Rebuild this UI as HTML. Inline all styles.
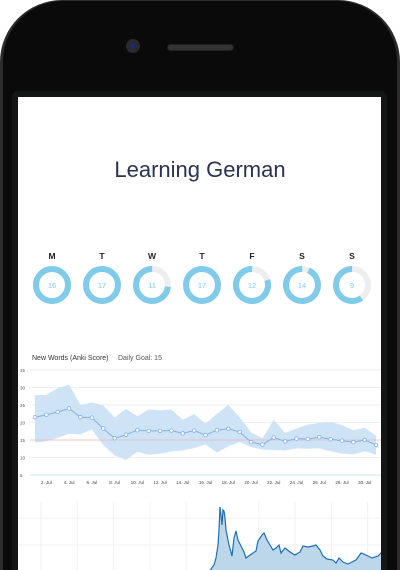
<!DOCTYPE html><html style="height:570px;overflow:hidden"><head><style>
html,body{margin:0;height:570px;overflow:hidden}
body{width:400px;background:#fff;position:relative;font-family:"Liberation Sans",sans-serif}
.ph{position:absolute;left:0;top:0;width:400px;height:570px;border-radius:62px 62px 0 0;background:#2c2c2c}
.ph2{position:absolute;left:3px;top:1px;width:394px;height:569px;border-radius:60px 60px 0 0;background:#0a0a0a}
.fr{position:absolute;left:12px;top:91px;width:375px;height:479px;border-radius:6px 6px 0 0;background:#141515}
.scr{position:absolute;left:18px;top:97px;width:363px;height:473px;background:#fff;overflow:hidden}
.cam{position:absolute;left:126px;top:39px;width:14px;height:14px;border-radius:50%;background:#2a2a2e}
.cam:after{content:"";position:absolute;left:4px;top:4px;width:6px;height:6px;border-radius:50%;background:#1b2a6a}
.sp{position:absolute;left:167px;top:44px;width:67px;height:7px;border-radius:4px;background:#333;border:1px solid #1f1f1f;box-sizing:border-box}
</style></head><body>
<div class="ph"></div><div class="ph2"></div><div class="cam"></div><div class="sp"></div><div class="fr"></div>
<div class="scr">
<svg width="363" height="473" viewBox="18 97 363 473" xmlns="http://www.w3.org/2000/svg" font-family="Liberation Sans, sans-serif">
<text x="200" y="177" text-anchor="middle" font-size="22" fill="#2a3350">Learning German</text>
<g id="donuts"></g>
<text x="32" y="360" font-size="7" fill="#333">New Words (Anki Score)</text>
<text x="118" y="360" font-size="7" fill="#555">Daily Goal: 15</text>
<g id="ch"></g>
</svg></div>
<script>
var h="";
var L=["M","T","W","T","F","S","S"],V=[16,17,11,17,12,14,9];
for(var i=0;i<7;i++){var cx=52+50*i,cy=285,r=16,c=2*Math.PI*r,f=Math.min(V[i]/15,1);
h+='<text x="'+cx+'" y="259" text-anchor="middle" font-size="8.5" font-weight="bold" fill="#222">'+L[i]+'</text>';
h+='<circle cx="'+cx+'" cy="'+cy+'" r="'+r+'" fill="none" stroke="#eee" stroke-width="6"/>';
h+='<circle cx="'+cx+'" cy="'+cy+'" r="'+r+'" fill="none" stroke="#80cbea" stroke-width="6" stroke-dasharray="'+(c*f)+' '+c+'" transform="rotate('+(-90+360*(1-f))+' '+cx+' '+cy+')"/>';
h+='<text x="'+cx+'" y="'+(cy+3)+'" text-anchor="middle" font-size="7.5" fill="#80cbea">'+V[i]+'</text>';}
document.getElementById("donuts").innerHTML=h;
var D=[21.5,22.2,23,24,21.5,21.4,18.3,15.5,16.5,17.8,17.6,17.6,17.7,16.9,17.7,16.4,17.8,18.2,17.3,14.4,13.7,15.7,14.6,15.4,15.3,15.8,15.2,14.8,14.4,15,13.6];
var U=[27.8,27.9,29.8,30.8,25,25.7,24.9,21.4,23.9,21.8,23.7,23.5,23.7,20.8,22.4,19.7,22.5,25,21.5,17.2,15.5,20.8,17,18.3,19.4,19.9,20.1,19.3,17.8,18.5,16.2];
var W=[14.3,14.6,15.6,16.8,16.6,18,13.6,10.6,9.3,11.6,10.8,11.1,11.7,12,12.7,13.7,11.4,13.2,14.4,13,12.3,12.1,12,12.6,12.5,12.6,11.8,11.1,10.9,11.8,10.8];
function X(i){return 35+i*11.37}function Y(v){return 475-(v-5)*3.5}
var g="";
for(var v=5;v<=35;v+=5){g+='<line x1="30" x2="381" y1="'+Y(v)+'" y2="'+Y(v)+'" stroke="'+(v==5?"#cfe3f5":"#eee")+'" stroke-width="1"/><text x="20" y="'+(Y(v)+2)+'" font-size="4.5" fill="#555">'+v+'</text>';}
var p="";for(i=0;i<31;i++)p+=X(i)+","+Y(U[i])+" ";for(i=30;i>=0;i--)p+=X(i)+","+Y(W[i])+" ";
g+='<polygon points="'+p+'" fill="#cfe3f6"/>';
g+='<line x1="30" x2="381" y1="'+Y(15)+'" y2="'+Y(15)+'" stroke="#f4a0a0" stroke-width="0.6"/>';
var q="";for(i=0;i<31;i++)q+=X(i)+","+Y(D[i])+" ";
g+='<polyline points="'+q+'" fill="none" stroke="#7fb0e6" stroke-width="1"/>';
for(i=0;i<31;i++)g+='<circle cx="'+X(i)+'" cy="'+Y(D[i])+'" r="1.8" fill="#fff" stroke="#7fb0e6" stroke-width="0.8"/>';
for(i=1;i<31;i+=2)g+='<text x="'+X(i)+'" y="484" text-anchor="middle" font-size="4.5" fill="#444">'+(i+1)+'. Jul</text>';
for(i=0;i<10;i++){var x=41+36.3*i;g+='<line x1="'+x+'" x2="'+x+'" y1="502" y2="570" stroke="#f2f2f2"/>';}
g+='<line x1="18" x2="381" y1="518" y2="518" stroke="#f2f2f2"/><line x1="18" x2="381" y1="545" y2="545" stroke="#f2f2f2"/>';
var B=[[208,572],[211,569],[214,565],[216,558],[218,545],[219,530],[220,507],[221,515],[222,525],[223,510],[224,511],[225,518],[226,530],[229,545],[232,556],[234,538],[236,531],[238,540],[241,546],[244,552],[246,558],[250,555],[253,553],[256,551],[258,541],[262,535],[264,533],[267,540],[270,545],[273,550],[276,548],[279,545],[281,553],[285,548],[290,552],[295,555],[300,552],[303,546],[308,547],[313,546],[316,545],[320,550],[323,556],[327,559],[333,560],[336,563],[339,558],[343,562],[348,564],[352,562],[356,560],[361,553],[366,555],[372,558],[378,556],[382,552]];
var b="";for(i=0;i<B.length;i++)b+=B[i][0]+","+B[i][1]+" ";
g+='<polygon points="'+b+' 382,572" fill="#bcd6ea"/><polyline points="'+b+'" fill="none" stroke="#1f6fb4" stroke-width="1.2"/>';
document.getElementById("ch").innerHTML=g;
</script>
</body></html>
